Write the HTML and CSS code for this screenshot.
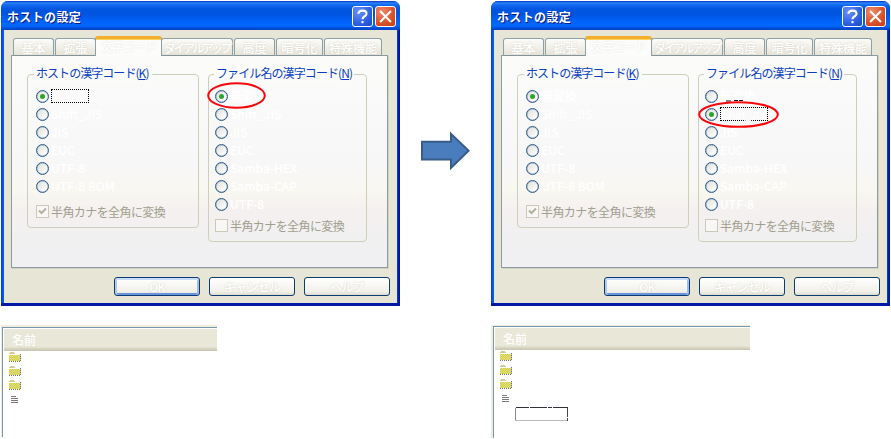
FILE: index.html
```
<!DOCTYPE html>
<html lang="ja">
<head>
<meta charset="utf-8">
<title>ホストの設定</title>
<link rel="stylesheet" href="styles.css">
</head>
<body>
<svg class="defs" width="0" height="0">
  <defs>
    <pattern id="dots" width="2" height="2" patternUnits="userSpaceOnUse"><rect width="2" height="2" fill="#f2ee14"/><rect width="1" height="1" fill="#c2c2b4"/><rect x="1" y="1" width="1" height="1" fill="#c2c2b4"/></pattern>
    <symbol id="folder" viewBox="0 0 12 10"><path d="M1 0h4v1h1v1H0V1h1z" fill="#d0cc98"/><path d="M0 3h12v6H0z" fill="url(#dots)"/><path d="M0 9.5h12M11.5 2v7" stroke="#77726c" stroke-dasharray="1 1" fill="none"/></symbol>
    <symbol id="doc" viewBox="0 0 7 7"><path d="M0 .5h5M0 2.5h7M0 4.5h7M0 6.5h7" stroke="#7d7777" fill="none"/></symbol>
  </defs>
</svg>
<main class="scene">
  <section class="dialog">
    <header class="titlebar"><h1>ホストの設定</h1><span class="cap help"><svg viewBox="0 0 21 21"><path d="M6 7.5C6 2.8 15 2.8 15 7.5C15 10.5 10.5 10 10.5 13.5M10.5 15.5v2.5" /></svg></span><span class="cap close"><svg viewBox="0 0 21 21"><path d="M4.5 4.5l12 12M16.5 4.5l-12 12"/></svg></span></header>
    <div class="client">
      <nav class="tabs"><span class="t1">基本</span><span class="t2">拡張</span><span class="t3 active">文字コード</span><span class="t4">ダイアルアップ</span><span class="t5">高度</span><span class="t6">暗号化</span><span class="t7">特殊機能</span></nav>
      <div class="panel">
        <div class="group host">
          <h2>ホストの漢字コード(<u>K</u>)</h2>
          <ul>
            <li><i class="radio on"></i><span class="focus f1">無変換</span></li>
            <li><i class="radio"></i><span>Shift_JIS</span></li>
            <li><i class="radio"></i><span>JIS</span></li>
            <li><i class="radio"></i><span>EUC</span></li>
            <li><i class="radio"></i><span>UTF-8</span></li>
            <li><i class="radio"></i><span>UTF-8 BOM</span></li>
          </ul>
          <div class="check"><i class="box"><svg viewBox="0 0 11 11"><path d="M2 4.5l2.5 2.5L9 2.5"/></svg></i><span>半角カナを全角に変換</span></div>
        </div>
        <div class="group file">
          <h2>ファイル名の漢字コード(<u>N</u>)</h2>
          <ul>
            <li><i class="radio on"></i><span>無変換</span><svg class="ring ring-a" width="59" height="27"><ellipse cx="29.5" cy="13.5" rx="28.3" ry="12.3"/></svg></li>
            <li><i class="radio"></i><span>Shift_JIS</span></li>
            <li><i class="radio"></i><span>JIS</span></li>
            <li><i class="radio"></i><span>EUC</span></li>
            <li><i class="radio"></i><span>Samba-HEX</span></li>
            <li><i class="radio"></i><span>Samba-CAP</span></li>
            <li><i class="radio"></i><span>UTF-8</span></li>
          </ul>
          <div class="check"><i class="box"></i><span>半角カナを全角に変換</span></div>
        </div>
      </div>
      <div class="buttons"><span class="btn default">OK</span><span class="btn">キャンセル</span><span class="btn">ヘルプ</span></div>
    </div>
  </section>

  <svg class="arrow" width="49" height="40" viewBox="0 0 49 40"><path d="M1 10.8H30V2.8L47.6 19.7L30 36.8V28.4H1z"/></svg>

  <section class="dialog">
    <header class="titlebar"><h1>ホストの設定</h1><span class="cap help"><svg viewBox="0 0 21 21"><path d="M6 7.5C6 2.8 15 2.8 15 7.5C15 10.5 10.5 10 10.5 13.5M10.5 15.5v2.5" /></svg></span><span class="cap close"><svg viewBox="0 0 21 21"><path d="M4.5 4.5l12 12M16.5 4.5l-12 12"/></svg></span></header>
    <div class="client">
      <nav class="tabs"><span class="t1">基本</span><span class="t2">拡張</span><span class="t3 active">文字コード</span><span class="t4">ダイアルアップ</span><span class="t5">高度</span><span class="t6">暗号化</span><span class="t7">特殊機能</span></nav>
      <div class="panel">
        <div class="group host">
          <h2>ホストの漢字コード(<u>K</u>)</h2>
          <ul>
            <li><i class="radio on"></i><span>無変換</span></li>
            <li><i class="radio"></i><span>Shift_JIS</span></li>
            <li><i class="radio"></i><span>JIS</span></li>
            <li><i class="radio"></i><span>EUC</span></li>
            <li><i class="radio"></i><span>UTF-8</span></li>
            <li><i class="radio"></i><span>UTF-8 BOM</span></li>
          </ul>
          <div class="check"><i class="box"><svg viewBox="0 0 11 11"><path d="M2 4.5l2.5 2.5L9 2.5"/></svg></i><span>半角カナを全角に変換</span></div>
        </div>
        <div class="group file">
          <h2>ファイル名の漢字コード(<u>N</u>)</h2>
          <ul>
            <li><i class="radio"></i><span>無変換</span><svg class="speck" width="18" height="2"><path d="M0 1h5M8 .5h4M13 .5h4"/></svg></li>
            <li><i class="radio on"></i><span class="focus f2">Shift_JIS</span><svg class="ring ring-b" width="81" height="27"><ellipse cx="40.5" cy="13.5" rx="39.3" ry="12.3"/></svg></li>
            <li><i class="radio"></i><span>JIS</span></li>
            <li><i class="radio"></i><span>EUC</span></li>
            <li><i class="radio"></i><span>Samba-HEX</span></li>
            <li><i class="radio"></i><span>Samba-CAP</span></li>
            <li><i class="radio"></i><span>UTF-8</span></li>
          </ul>
          <div class="check"><i class="box"></i><span>半角カナを全角に変換</span></div>
        </div>
      </div>
      <div class="buttons"><span class="btn default">OK</span><span class="btn">キャンセル</span><span class="btn">ヘルプ</span></div>
    </div>
  </section>

  <section class="list left">
    <div class="inner">
      <div class="head">名前</div>
      <svg class="folder"><use href="#folder"/></svg>
      <svg class="folder"><use href="#folder"/></svg>
      <svg class="folder"><use href="#folder"/></svg>
      <svg class="doc"><use href="#doc"/></svg>
    </div>
  </section>
  <section class="list right">
    <div class="inner">
      <div class="head">名前</div>
      <svg class="folder"><use href="#folder"/></svg>
      <svg class="folder"><use href="#folder"/></svg>
      <svg class="folder"><use href="#folder"/></svg>
      <svg class="doc"><use href="#doc"/></svg>
      <svg class="frame" width="53" height="14"><path d="M.5 1v13" stroke="#888"/><path d="M0 13.5h53" stroke="#bbb"/><path d="M52.5 1v13" stroke="#4d4640" stroke-dasharray="9 1"/><path d="M1 .5h13M15 .5h17M33 .5h4M38 .5h15" stroke="#333039"/></svg>
    </div>
  </section>
</main>
</body>
</html>
```
FILE: styles.css
```
* { box-sizing: border-box; }
body { margin: 0; background: #fff; overflow: hidden; font: 12px/14px "Noto Sans CJK JP", sans-serif; }
.defs { position: absolute; }
svg { display: block; flex: none; }
h1, h2, ul { margin: 0; padding: 0; list-style: none; }
.scene { display: grid; grid-template-columns: 399px 91px 399px; grid-template-rows: 305px 132px; padding: 1px; width: 891px; height: 439px; }

.dialog { background: linear-gradient(90deg, #0831d9 0, #0860f0 2px, #0054e3 3px, #0054e3 396px, #0025b8 397px, #00138c); border-radius: 7px 7px 0 0; border-bottom: 3px solid #0018a8; height: 305px; overflow: hidden; }
.titlebar { height: 29px; display: flex; padding: 5px 4px 0 6px; background: linear-gradient(#0831c8 0, #2a86f8 2px, #1268ee 4px, #0056e0 8px, #0054e0 13px, #0062f8 20px, #0068ff 25px, #0050d8 27px, #0040c0); }
h1 { flex: 1; font-size: 12px; line-height: 21px; font-weight: 700; color: #fff; letter-spacing: .35px; text-shadow: 1px 1px #0a1883; }
.cap { width: 21px; height: 21px; border: 1px solid #fff; border-radius: 3px; margin-left: 2px; background: radial-gradient(circle at 30% 25%, #6d94f6, #2d5fe0 60%, #1c49c8); }
.cap.close { background: radial-gradient(circle at 30% 25%, #ee8b6c, #dc4f28 60%, #c23c18); }
.cap svg { width: 19px; height: 19px; }
.cap path { fill: none; stroke: #fff; stroke-width: 2.3; }
.client { margin: 0 3px; height: 273px; padding: 6px 9px 0 7px; background: #e7e6d6; }

.tabs { display: flex; align-items: flex-end; height: 20px; padding-left: 2px; margin-bottom: -1px; position: relative; }
.tabs span { height: 18px; padding-top: 2px; line-height: 14px; border: 1px solid #8fa1a8; border-bottom-color: #82929a; border-radius: 3px 3px 0 0; background: linear-gradient(#fcfcfa, #e6e4d8); color: #fff; font-weight: 500; text-align: center; white-space: nowrap; text-shadow: 0 0 2px #d2cec0; }
.tabs .t1 { width: 41px; margin-right: 1px; }
.tabs .t2 { width: 41px; }
.tabs .t3 { width: 67px; margin-left: -1px; }
.tabs .t4 { width: 72px; margin-left: -1px; letter-spacing: -2.6px; }
.tabs .t5 { width: 41px; margin-left: 1px; }
.tabs .t6 { width: 47px; margin-left: 1px; }
.tabs .t7 { width: 58px; margin-left: 1px; }
.tabs .active { height: 20px; padding-top: 1px; border-top: 3px solid #f4ae2c; border-bottom: 0; background: #fcfcfb; box-shadow: inset 0 1px #ffd25e; letter-spacing: -1px; text-shadow: 0 0 2px #e4e1dc; }
.panel { height: 213px; border: 1px solid #8b9ba2; background: linear-gradient(#fbfbfa 0, #f8f7f8 110px, #f8f7f0 135px, #f5f0f0 155px, #f1f0f1 180px, #f0eff1); padding: 18px 0 0 15px; display: flex; align-items: flex-start; box-shadow: 1px 1px #d4d2c2; }

.group { border: 1px solid #cfcfb9; border-radius: 4px; padding: 0 0 0 8px; }
.host { width: 172px; height: 154px; margin-right: 9px; }
.file { width: 159px; height: 168px; padding-left: 6px; }
h2 { width: max-content; margin: -12px 0 0 -2px; padding: 0 2px; height: 20px; line-height: 20px; font-size: 12px; font-weight: 400; color: #0a3fc0; background: #fbfbfa; white-space: nowrap; letter-spacing: -.8px; }
.host h2 { letter-spacing: -.95px; padding-right: 4px; }
.file h2 { letter-spacing: -.9px; margin-left: -1px; }
ul { padding-top: 4px; color: #fff; font-weight: 500; }
li { display: flex; align-items: center; height: 18px; position: relative; }
.radio { flex: none; width: 13px; height: 13px; border: 1px solid #2c5c8c; border-radius: 50%; margin-right: 2px; background: linear-gradient(135deg, #dcdcd6, #fff 85%); display: flex; align-items: center; justify-content: center; box-shadow: inset 0 0 0 .5px #2c5c8c66; }
.radio.on::after { content: ""; width: 5px; height: 5px; border-radius: 50%; background: #2fa52c; }
.focus { height: 14px; line-height: 12px; border: 1px dotted #000; white-space: nowrap; font-size: 11px; text-align: center; }
.f1 { width: 38px; }
.f2 { width: 48px; letter-spacing: -.5px; }
.ring { position: absolute; overflow: visible; }
.ring-a { left: -8px; top: -5px; }
.ring-b { left: -7px; top: -4px; }
.ring ellipse { fill: none; stroke: #f5080c; stroke-width: 2; }
.speck { position: absolute; left: 21px; top: 13px; }
.speck path { stroke: #111; stroke-width: 1; }
.check { display: flex; align-items: center; height: 13px; margin-top: 10px; color: #a09f8d; letter-spacing: -.58px; white-space: nowrap; }
.check span { line-height: 13px; padding-bottom: 1px; }
.file .check { margin-top: 6px; }
.box { width: 13px; height: 13px; border: 1px solid #cbc9b8; margin-right: 2px; background: #f8f7f5; }
.box path { fill: none; stroke: #b2b1a0; stroke-width: 2; }

.buttons { display: flex; gap: 9px; padding: 9px 0 0 103px; margin-right: -3px; }
.btn { width: 86px; height: 19px; line-height: 17px; border: 1px solid #0d3c74; border-radius: 3px; text-align: center; color: #fff; font-weight: 500; background: linear-gradient(#fff, #f1f0e9 80%, #dedbd0); text-shadow: 0 0 2px #d2cec0; letter-spacing: -.8px; }
.btn.default { box-shadow: inset 0 2px #c9dcfa, inset 2px 0 #b0c8f0, inset -2px 0 #a0bcec, inset 0 -2px #6b92dc; }

.arrow { margin: 130px 0 0 21px; }
.arrow path { fill: #4a7dbe; stroke: #385d8a; stroke-width: 2; }

.list { margin-top: 19px; border: solid #efecdd; border-width: 2px 0 0 1px; }
.inner { border: solid #7399ac; border-width: 1px 0 0 1px; height: 100%; padding: 1px 0 0 1px; }
.left { width: 216px; height: 112px; }
.right { grid-column: 3; width: 259px; height: 113px; border-left-width: 2px; border-top-width: 1px; }
.head { height: 22px; padding-left: 8px; line-height: 22px; color: #fff; font-weight: 500; background: linear-gradient(#e9e7d8 0 18px, #dcd9c7 19px, #d0ccba 21px, #c5c2b0); margin-bottom: 1px; }
.folder { width: 12px; height: 10px; margin: 0 0 4px 5px; }
.doc { width: 7px; height: 7px; margin: 6px 0 0 7px; }
.frame { margin: 5px 0 0 20px; }
```
